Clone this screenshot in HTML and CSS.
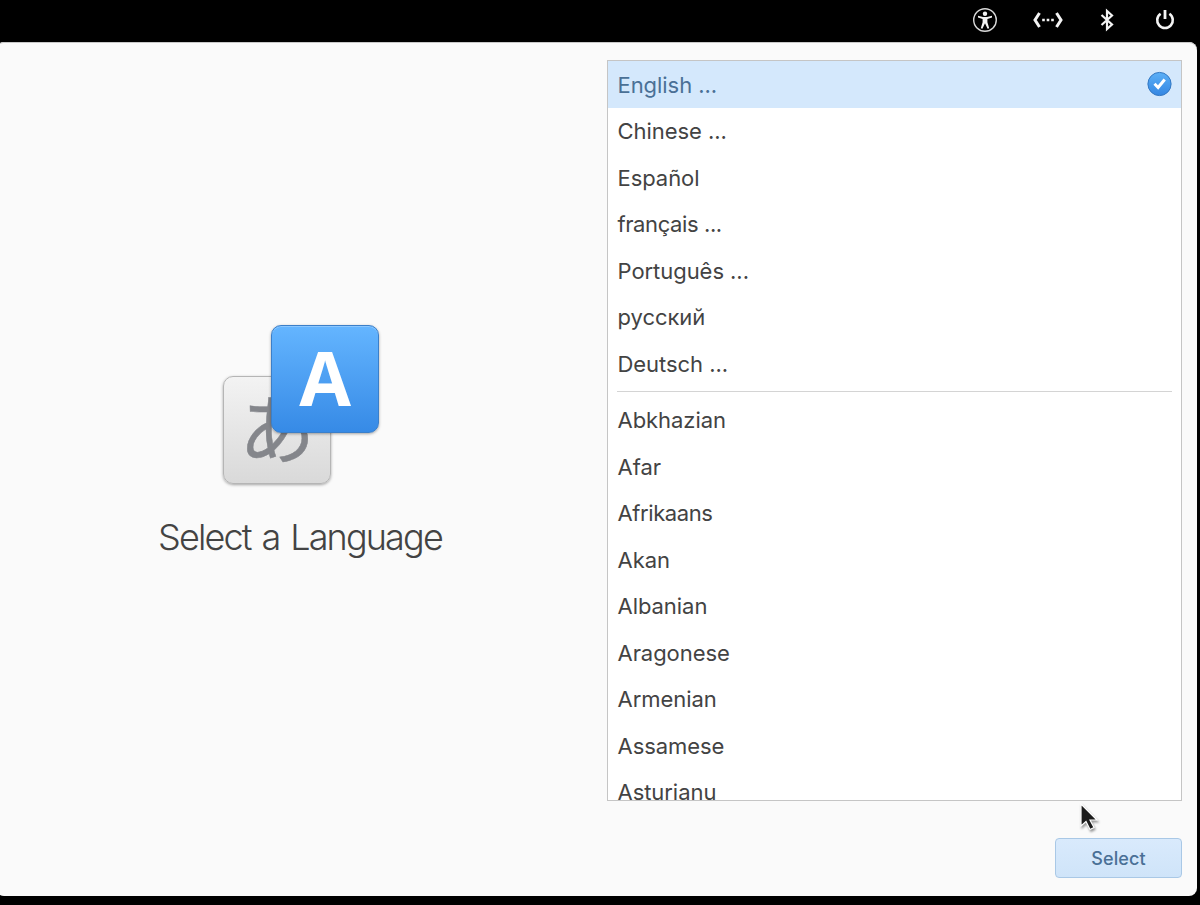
FILE: index.html
```html
<!DOCTYPE html>
<html lang="en">
<head>
  <meta charset="UTF-8" />
  <meta name="viewport" content="width=device-width, initial-scale=1.0"/>
  <title>Select a Language</title>
  <link rel="stylesheet" href="styles.css">
</head>
<body>
  <header class="topbar">
    <svg width="26" height="26" viewBox="0 0 26 26">
      <circle cx="13" cy="13" r="11.3" fill="none" stroke="#d8d8d8" stroke-width="1.4"/>
      <circle cx="13" cy="6.8" r="2.2" fill="#f4f4f4"/>
      <path d="M6 8.800 11 10h4L20 8.800v1.700L15.400 12v3.200l1.800 6-1.600.5L13 16.200l-2.600 5.500-1.600-.5 1.800-6V12L6 10.500z" fill="#f4f4f4"/>
    </svg>
    <svg class="network" width="32" height="26" viewBox="0 0 32 26">
      <path d="M7.500 6 3 13l4.500 7M24.500 6 29 13l-4.500 7" fill="none" stroke="#f4f4f4" stroke-width="3"/>
      <path d="M10.200 11.700h2.600v2.600h-2.600zM14.700 11.700h2.600v2.600h-2.600zM19.200 11.700h2.600v2.600h-2.600z" fill="#f4f4f4"/>
    </svg>
    <svg class="bluetooth" width="16" height="26" viewBox="0 0 16 26">
      <path d="M2.500 8 13 17.500 8 22V4l5 4.500L2.500 18" fill="none" stroke="#f4f4f4" stroke-width="2.200"/>
    </svg>
    <svg class="power" width="22" height="26" viewBox="0 0 22 26">
      <path d="M6.600 6.800a7.800 7.800 0 1 0 8.800 0" fill="none" stroke="#f4f4f4" stroke-width="2.600"/>
      <path d="M11 3v9" stroke="#f4f4f4" stroke-width="2.800"/>
    </svg>
  </header>

  <main class="window">
    <section class="intro">
      <div class="logo">
        <div class="tile tile-kana" lang="ja">あ</div>
        <div class="tile tile-latin">A</div>
      </div>
      <h1>Select a Language</h1>
    </section>

    <section class="chooser">
      <ul class="languages">
        <li class="selected">
          <span>English ...</span>
          <svg width="26" height="26" viewBox="0 0 26 26">
            <defs>
              <linearGradient id="check-fill" x1="0" y1="0" x2="0" y2="1">
                <stop offset="0" stop-color="#5cb0f7"/>
                <stop offset="1" stop-color="#3486e2"/>
              </linearGradient>
            </defs>
            <circle cx="13.500" cy="13" r="11.600" fill="url(#check-fill)" stroke="#3478c2" stroke-width="1"/>
            <path d="m8.500 12.800 3.600 3.700 6.600-8" fill="none" stroke="#fff" stroke-width="3"/>
          </svg>
        </li>
        <li>Chinese ...</li>
        <li>Español</li>
        <li class="tight">français ...</li>
        <li>Português ...</li>
        <li>русский</li>
        <li>Deutsch ...</li>
        <li class="separator"></li>
        <li>Abkhazian</li>
        <li>Afar</li>
        <li class="tight">Afrikaans</li>
        <li>Akan</li>
        <li>Albanian</li>
        <li>Aragonese</li>
        <li>Armenian</li>
        <li>Assamese</li>
        <li>Asturianu</li>
      </ul>
      <button class="btn-select">Select</button>
    </section>
  </main>

  <svg class="cursor" width="28" height="34" viewBox="0 0 28 34">
    <path d="M4 3v22l5-4.500 4 8 4-2-4-7.500h7z" fill="#1c1c1c" stroke="#fff" stroke-width="1.200"/>
  </svg>
</body>
</html>
```

FILE: styles.css
```css
:root {
  --window: #fafafa;
  --text: #434343;
  --accent: #d4e8fc;
  --accent-text: #4a7096;
  --border: #c5c5c5;
}

* {
  box-sizing: border-box;
}

body {
  margin: 0;
  height: 905px;
  background: #000;
  color: var(--text);
  font-family: Inter, "Noto Sans CJK JP", sans-serif;
  overflow: hidden;
}

.topbar {
  height: 42px;
  padding: 6.5px 24px 0 0;
  display: flex;
  justify-content: flex-end;
}

.network { margin-left: 34px; }
.bluetooth { margin-left: 34.5px; }
.power { margin-left: 39.5px; }

.window {
  width: 1201px;
  height: 854px;
  margin-left: -4px;
  padding: 18px 15px 17px 4px;
  display: flex;
  background: var(--window);
  border-radius: 8px;
  box-shadow: inset 0 1px #c8c8c8;
}

.intro {
  width: 600px;
  display: flex;
  flex-direction: column;
  align-items: center;
  padding-top: 265px;
}

.logo {
  position: relative;
  width: 156px;
  height: 160px;
  margin-left: 2px;
}

.tile {
  position: absolute;
  width: 108px;
  height: 108px;
  border-radius: 10px;
  text-align: center;
}

.tile-kana {
  left: 0;
  top: 51px;
  color: #84868b;
  background: linear-gradient(#f3f3f3, #d9d9d9);
  border: 1px solid #b5b5b5;
  box-shadow: 0 1px 3px rgba(0, 0, 0, 0.35);
  font-family: "Noto Sans CJK JP", sans-serif;
  font-size: 76px;
  font-weight: 400;
  line-height: 97px;
  -webkit-text-stroke: 0.5px #84868b;
}

.tile-latin {
  right: 0;
  top: 0;
  color: #fff;
  background: linear-gradient(#64b5ff, #368ae6);
  border: 1px solid #3b7fc9;
  box-shadow: 0 1px 3px rgba(0, 0, 0, 0.35), inset 0 1px rgba(255, 255, 255, 0.25);
  font-family: "Open Sans", sans-serif;
  font-size: 75px;
  font-weight: 700;
  line-height: 103px;
}

h1 {
  margin: 29px 0 0;
  font-size: 36px;
  font-weight: 300;
  line-height: 46px;
  letter-spacing: -1.85px;
  word-spacing: 2.5px;
}

.chooser {
  width: 575px;
  margin-left: 7px;
  display: flex;
  flex-direction: column;
}

.languages {
  height: 741px;
  margin: 0;
  padding: 0;
  list-style: none;
  overflow: hidden;
  background: #fff;
  border: 1px solid var(--border);
}

.languages li {
  height: 46.5px;
  padding: 1px 9px 0 9.5px;
  display: flex;
  align-items: center;
  justify-content: space-between;
  font-size: 22px;
  letter-spacing: -0.05px;
}

.languages .tight {
  letter-spacing: -0.4px;
}

.languages .selected {
  background: var(--accent);
  color: var(--accent-text);
}

.languages .selected svg {
  margin-bottom: 1px;
}

.languages .separator {
  height: 1px;
  margin: 4.5px 9px 4.5px;
  padding: 0;
  background: #d4d4d4;
}

.btn-select {
  width: 127px;
  height: 40px;
  margin: 37px 0 0;
  padding: 0;
  align-self: flex-end;
  color: var(--accent-text);
  background: linear-gradient(#d9eafc, #cfe4f9);
  border: 1px solid #a9c8e6;
  border-radius: 4px;
  font-family: inherit;
  font-size: 18px;
  font-weight: 500;
  letter-spacing: 0.1px;
}

.cursor {
  position: absolute;
  left: 1077px;
  top: 801px;
  filter: drop-shadow(1px 2px 1px rgba(0, 0, 0, 0.4));
}
```
